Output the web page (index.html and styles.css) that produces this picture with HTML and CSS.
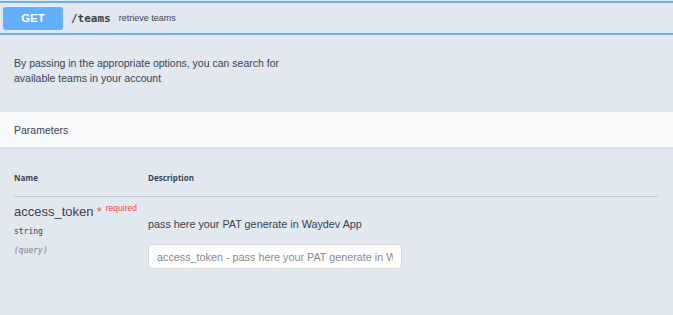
FILE: index.html
```html
<!DOCTYPE html>
<html lang="en">
<head>
  <meta charset="UTF-8">
  <title>GET /teams</title>
  <link rel="stylesheet" href="styles.css">
</head>
<body>

  <div class="opblock">
    <div class="summary">
      <span class="method">GET</span>
      <span class="path">/teams</span>
      <span class="summary-text">retrieve teams</span>
    </div>

    <div class="description">
      <p>By passing in the appropriate options, you can search for<br>available teams in your account</p>
    </div>

    <div class="section-header">
      <h4>Parameters</h4>
    </div>

    <div class="parameters">
      <div class="param-head">
        <div class="col-name">Name</div>
        <div class="col-desc">Description</div>
      </div>

      <div class="param-row">
        <div class="col-name">
          <div class="param-name">access_token <span class="star">*</span><sup class="required">required</sup></div>
          <div class="param-type">string</div>
          <div class="param-in">(query)</div>
        </div>
        <div class="col-desc">
          <p class="param-desc">pass here your PAT generate in Waydev App</p>
          <input type="text" placeholder="access_token - pass here your PAT generate in Waydev App">
        </div>
      </div>
    </div>
  </div>

</body>
</html>
```

FILE: styles.css
```css
body {
  margin: 0;
  font-family: 'Liberation Sans', Arial, sans-serif;
  color: #3b4151;
  background-color: #e1e8f0;
}

.opblock {
  border-top: 2px solid #6cb0f2;
  margin-top: 1px;
}

.summary {
  display: flex;
  align-items: center;
  height: 30px;
  padding: 0 3px;
  border-bottom: 2px solid #6cb0f2;
}

.method {
  display: inline-block;
  width: 60px;
  height: 23px;
  line-height: 23px;
  text-align: center;
  background-color: #61affe;
  color: white;
  font-weight: bold;
  font-size: 11.5px;
  border-radius: 3px;
}

.path {
  font-family: 'DejaVu Sans Mono', monospace;
  font-size: 11px;
  font-weight: 600;
  margin-left: 8px;
  color: #3b4151;
}

.summary-text {
  font-size: 9px;
  margin-left: 8px;
  color: #3b4151;
}

.description {
  padding: 21px 14px 26px;
}

.description p {
  margin: 0;
  font-size: 10.5px;
  line-height: 15px;
}

.section-header {
  background-color: #f8fafb;
  border-bottom: 2px solid #d8dde3;
  height: 35px;
  display: flex;
  align-items: center;
  padding: 0 14px;
}

.section-header h4 {
  margin: 0;
  font-size: 10.5px;
  font-weight: normal;
}

.parameters {
  padding: 23px 14px 0;
}

.param-head {
  display: flex;
  font-family: 'Open Sans', sans-serif;
  font-weight: bold;
  font-size: 8px;
  padding-bottom: 13px;
  border-bottom: 1px solid #c1c9d3;
  margin-right: 1px;
}

.col-name {
  width: 134px;
}

.col-desc {
  flex: 1;
}

.param-row {
  display: flex;
  padding-top: 7px;
}

.param-name {
  font-size: 13px;
  white-space: nowrap;
}

.star {
  color: #ff3e3e;
  font-size: 12px;
}

.required {
  color: #ff3e3e;
  font-size: 8.5px;
  vertical-align: top;
  margin-left: 4px;
  position: relative;
  top: -1px;
}

.param-type {
  font-family: 'DejaVu Sans Mono', monospace;
  font-size: 8px;
  margin-top: 8px;
}

.param-in {
  font-family: 'DejaVu Sans Mono', monospace;
  font-size: 8px;
  font-style: italic;
  color: #808080;
  margin-top: 10px;
}

.param-desc {
  margin: 14px 0 14px;
  font-size: 10.8px;
}

input[type="text"] {
  width: 254px;
  height: 25px;
  box-sizing: border-box;
  padding: 0 8px;
  border: 1px solid #d9d9d9;
  border-radius: 4px;
  background: white;
  font-family: 'Liberation Sans', Arial, sans-serif;
  font-size: 10.8px;
}

input::placeholder {
  color: #8a8a8a;
}
```
